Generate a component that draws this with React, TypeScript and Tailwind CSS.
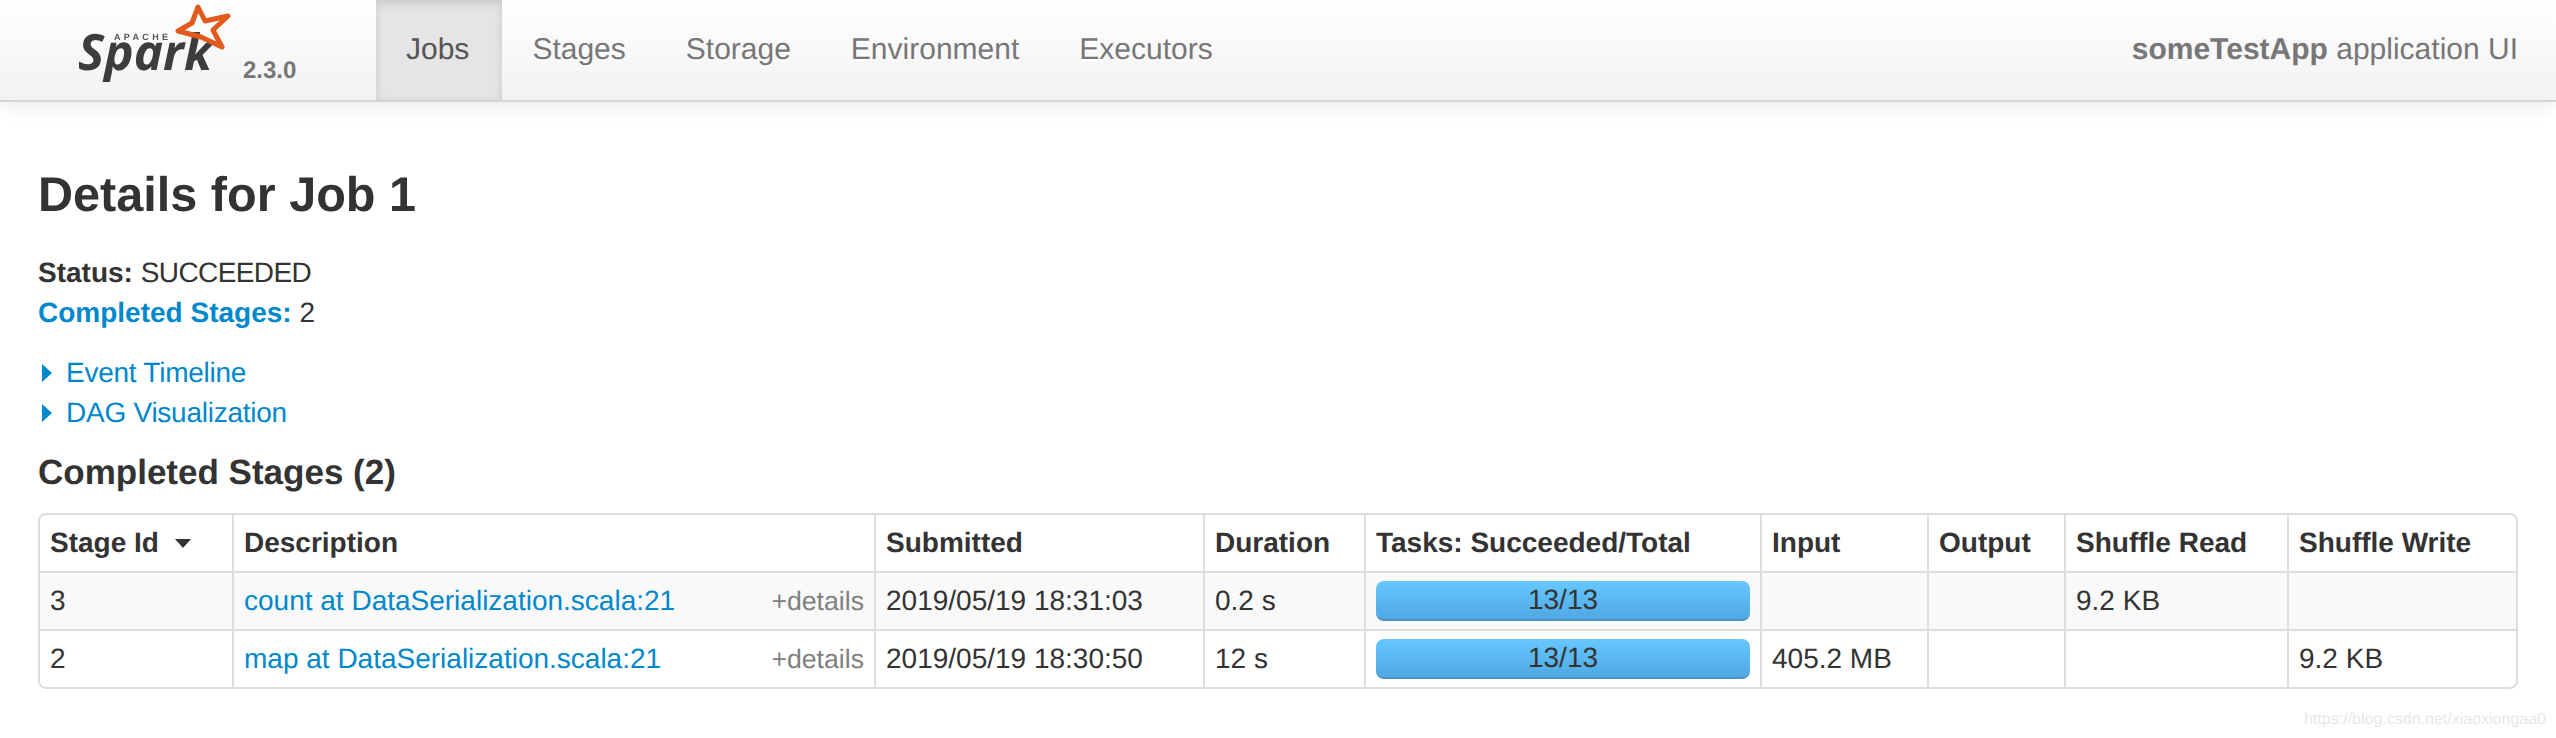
const tabs = ['Jobs', 'Stages', 'Storage', 'Environment', 'Executors']

const columns = [
  { label: 'Stage Id', width: 'w-[192px]' },
  { label: 'Description', width: 'w-[642px]' },
  { label: 'Submitted', width: 'w-[329px]' },
  { label: 'Duration', width: 'w-[161px]' },
  { label: 'Tasks: Succeeded/Total', width: 'w-[396px]' },
  { label: 'Input', width: 'w-[167px]' },
  { label: 'Output', width: 'w-[137px]' },
  { label: 'Shuffle Read', width: 'w-[223px]' },
  { label: 'Shuffle Write', width: 'w-[229px]' },
]

const rows = [
  {
    id: '3',
    description: 'count at DataSerialization.scala:21',
    submitted: '2019/05/19 18:31:03',
    duration: '0.2 s',
    input: '',
    read: '9.2 KB',
    write: '',
  },
  {
    id: '2',
    description: 'map at DataSerialization.scala:21',
    submitted: '2019/05/19 18:30:50',
    duration: '12 s',
    input: '405.2 MB',
    read: '',
    write: '9.2 KB',
  },
]

function SparkLogo() {
  return (
    <svg width="170" height="90" viewBox="70 0 170 90" className="blur-[0.5px] shrink-0">
      <text
        x="78"
        y="70"
        textLength="134"
        lengthAdjust="spacingAndGlyphs"
        className="fill-[#3d3d3d] text-[50px] font-bold italic font-['Open_Sans',sans-serif]"
      >
        Spark
      </text>
      <text x="114" y="40" textLength="54" className="fill-[#555555] text-[9px] font-bold font-['Liberation_Sans',sans-serif]">
        APACHE
      </text>
      <path
        d="M198 7 L205 21 L228 16 L213 30 L222 47 L201 37 L178 31 L192 23 Z"
        fill="none"
        stroke="#e25a1c"
        strokeWidth="5"
        strokeLinejoin="round"
      />
    </svg>
  )
}

function ProgressBar() {
  return (
    <div className="h-10 rounded-lg border-b-2 border-[#4a93c6] bg-gradient-to-b from-[#66c8ff] to-[#50a8e2] text-center leading-[38px] text-[#333333]">
      13/13
    </div>
  )
}

export default function App() {
  const cell = 'border-l-2 border-[#dddddd] px-[10px] first:border-l-0'

  return (
    <div className="relative min-h-[738px] bg-white font-['Liberation_Sans',Arial,sans-serif] text-[28px] text-[#333333] [text-rendering:geometricPrecision]">
      <div className="flex h-[102px] items-stretch border-b-2 border-[#d4d4d4] bg-gradient-to-b from-white to-[#f2f2f2] pl-[70px] pr-[38px] shadow-[0_2px_20px_rgba(0,0,0,0.1)]">
        <SparkLogo />
        <span className="mt-[55px] ml-[3px] w-[133px] text-[24px] leading-[32px] font-bold text-[#777777]">2.3.0</span>
        <div className="flex text-[30px]">
          {tabs.map((tab, i) => (
            <a
              key={tab}
              className={
                i === 0
                  ? 'bg-[#e5e5e5] pl-[30px] pr-[33px] leading-[100px] text-[#555555] shadow-[inset_0_3px_10px_rgba(0,0,0,0.13)]'
                  : 'px-[30px] leading-[100px] text-[#777777] [text-shadow:0_2px_0_#ffffff]'
              }
            >
              {tab}
            </a>
          ))}
        </div>
        <div className="ml-auto text-[30px] leading-[100px] text-[#777777]">
          <strong>someTestApp</strong> application UI
        </div>
      </div>

      <div className="px-[38px]">
        <h3 className="mt-[53px] text-[48.6px] leading-[80px] font-bold">Details for Job 1</h3>

        <ul className="mt-[18px] leading-[40px]">
          <li>
            <strong>Status:</strong> <span className="tracking-[-0.6px]">SUCCEEDED</span>
          </li>
          <li>
            <a className="font-bold text-[#0088cc]">Completed Stages:</a> 2
          </li>
        </ul>

        <div className="mt-5 leading-[40px] tracking-[-0.25px] text-[#0088cc]">
          {['Event Timeline', 'DAG Visualization'].map((label) => (
            <div key={label} className="flex items-center">
              <span className="ml-[4px] mr-[14px] h-0 w-0 border-y-[9px] border-l-[10px] border-y-transparent border-l-[#0088cc]" />
              <a>{label}</a>
            </div>
          ))}
        </div>

        <h4 className="mt-5 text-[35px] leading-[40px] font-bold">Completed Stages (2)</h4>

        <div className="mt-5 w-[2480px] overflow-hidden rounded-lg border-2 border-[#dddddd]">
          <table className="w-full table-fixed border-separate border-spacing-0">
            <colgroup>
              {columns.map((c) => (
                <col key={c.label} className={c.width} />
              ))}
            </colgroup>
            <thead>
              <tr className="h-[56px]">
                {columns.map((c, i) => (
                  <th key={c.label} className={`${cell} text-left font-bold`}>
                    {c.label}
                    {i === 0 && (
                      <span className="ml-[16px] inline-block h-0 w-0 -translate-y-[4px] border-x-[8px] border-t-[9px] border-x-transparent border-t-[#333333]" />
                    )}
                  </th>
                ))}
              </tr>
            </thead>
            <tbody>
              {rows.map((r, i) => (
                <tr key={r.id} className={i === 0 ? 'h-[58px] bg-[#f9f9f9]' : 'h-[58px]'}>
                  <td className={`${cell} border-t-2`}>{r.id}</td>
                  <td className={`${cell} border-t-2`}>
                    <div className="flex items-center justify-between">
                      <a className="text-[#0088cc]">{r.description}</a>
                      <span className="text-[26.67px] text-[#808080]">+details</span>
                    </div>
                  </td>
                  <td className={`${cell} border-t-2`}>{r.submitted}</td>
                  <td className={`${cell} border-t-2`}>{r.duration}</td>
                  <td className={`${cell} border-t-2`}>
                    <ProgressBar />
                  </td>
                  <td className={`${cell} border-t-2`}>{r.input}</td>
                  <td className={`${cell} border-t-2`} />
                  <td className={`${cell} border-t-2`}>{r.read}</td>
                  <td className={`${cell} border-t-2`}>{r.write}</td>
                </tr>
              ))}
            </tbody>
          </table>
        </div>
      </div>

      <span className="absolute right-[10px] top-[708px] text-[16px] leading-[24px] text-[#e8e8e8]">
        https://blog.csdn.net/xiaoxiongaa0
      </span>
    </div>
  )
}
